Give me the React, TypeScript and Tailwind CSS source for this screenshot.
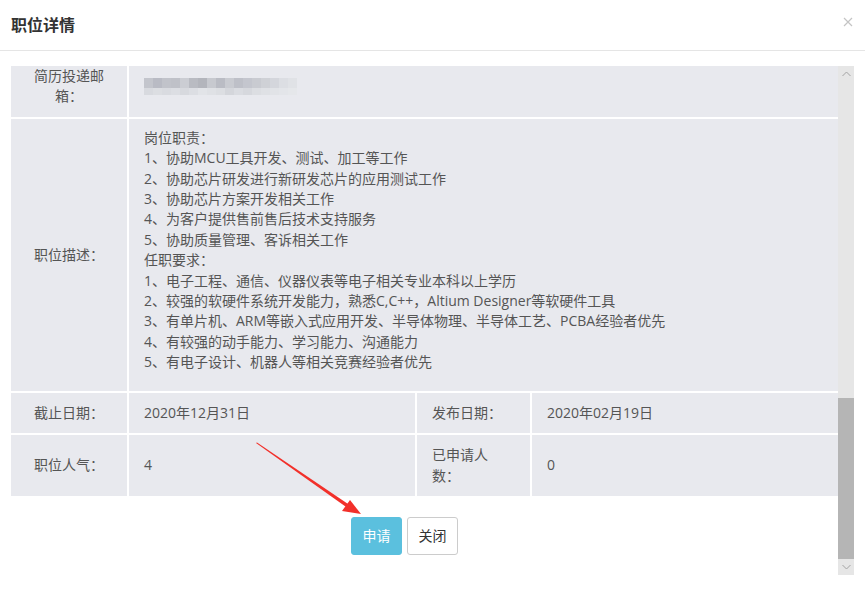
import React from "react";

const duties = [
  "岗位职责：",
  "1、协助MCU工具开发、测试、加工等工作",
  "2、协助芯片研发进行新研发芯片的应用测试工作",
  "3、协助芯片方案开发相关工作",
  "4、为客户提供售前售后技术支持服务",
  "5、协助质量管理、客诉相关工作",
  "任职要求：",
  "1、电子工程、通信、仪器仪表等电子相关专业本科以上学历",
  "2、较强的软硬件系统开发能力，熟悉C,C++，Altium Designer等软硬件工具",
  "3、有单片机、ARM等嵌入式应用开发、半导体物理、半导体工艺、PCBA经验者优先",
  "4、有较强的动手能力、学习能力、沟通能力",
  "5、有电子设计、机器人等相关竞赛经验者优先",
];

// mosaic used to hide the email address
const mosaicTop = ["#c3c5cc", "#b9bbc4", "#c1c3ca", "#bfc1c8", "#cbcdd3", "#b9bbc2", "#b3b5bc", "#c7c9cf", "#babcc4", "#c9cbd1", "#bec0c8", "#c4c6ce", "#c9cbd1", "#cfd1d6", "#d4d6dc", "#dcdee3", "#e0e2e6"];
const mosaicBottom = ["#d8dadf", "#dcdee2", "#d9dbe0", "#dcdee3", "#d7d9de", "#dcdee3", "#e2e4e8", "#dfe1e5", "#dcdee2", "#d4d6db", "#dadce1", "#d6d8dd", "#dcdee2", "#dfe1e5", "#e1e3e7", "#e3e5e9", "#e5e7ea"];

function Label({ children, left }: { children: React.ReactNode; left?: boolean }) {
  return (
    <div
      className={
        "flex items-center bg-[#e8e9ee] py-[10px] text-[14px] leading-[20.4px] text-[#555] " +
        (left ? "px-[15px]" : "justify-center px-[22px] text-center")
      }
    >
      <span>{children}</span>
    </div>
  );
}

function Value({ children, span }: { children: React.ReactNode; span?: boolean }) {
  return (
    <div
      className={
        "flex items-center bg-[#e8e9ee] px-[15px] py-[10px] text-[14px] leading-[20.4px] text-[#555] " +
        (span ? "col-span-3" : "")
      }
    >
      {children}
    </div>
  );
}

export default function App() {
  return (
    <div
      className="relative h-[594px] w-[865px] overflow-hidden bg-white"
      style={{ fontFamily: '"Open Sans", "Noto Sans CJK SC", sans-serif' }}
    >
      <div className="flex h-[51px] items-center justify-between border-b border-[#e5e5e5] pl-[11px] pr-[12px]">
        <h4 className="text-[16px] font-bold text-[#333]">职位详情</h4>
        <svg width="10" height="10" viewBox="0 0 10 10" className="mt-[-6px]">
          <path d="M1 1L9 9M9 1L1 9" stroke="#c4c4c4" strokeWidth="1.2" />
        </svg>
      </div>

      <div className="flex pl-[11px] pt-[15px]">
        <div className="h-[509px] flex-1 overflow-hidden">
          <div className="mt-[-10px] grid grid-cols-[116px_286px_113px_1fr] gap-[2px] bg-white">
            <Label>简历投递邮箱：</Label>
            <Value span>
              <div className="flex flex-col">
                <div className="flex">
                  {mosaicTop.map((c, i) => (
                    <div key={i} className="h-[10px] w-[9px]" style={{ backgroundColor: c }} />
                  ))}
                </div>
                <div className="flex">
                  {mosaicBottom.map((c, i) => (
                    <div key={i} className="h-[7px] w-[9px]" style={{ backgroundColor: c }} />
                  ))}
                </div>
              </div>
            </Value>

            <Label>职位描述：</Label>
            <div className="col-span-3 bg-[#e8e9ee] pb-[18px] pl-[15px] pt-[9px] text-[14px] leading-[20.4px] text-[#555]">
              {duties.map((d) => (
                <p key={d}>{d}</p>
              ))}
            </div>

            <Label>截止日期：</Label>
            <Value>2020年12月31日</Value>
            <Label left>发布日期：</Label>
            <Value>2020年02月19日</Value>

            <Label>职位人气：</Label>
            <Value>4</Value>
            <Label left>已申请人数：</Label>
            <Value>0</Value>
          </div>

          <div className="flex gap-[5px] pl-[340px] pt-[21px]">
            <button className="h-[38px] w-[51px] rounded-[3px] border border-[#5bc0de] bg-[#5bc0de] text-[14px] text-white">
              申请
            </button>
            <button className="h-[38px] w-[51px] rounded-[3px] border border-[#ccc] bg-white text-[14px] text-[#333]">
              关闭
            </button>
          </div>
        </div>

        <div className="flex h-[509px] w-[16px] flex-col bg-[#e6e6e6]">
          <div className="flex h-[16px] items-center justify-center">
            <svg width="9" height="6" viewBox="0 0 9 6">
              <path d="M0.5 5L4.5 1L8.5 5" fill="none" stroke="#a3a3a3" strokeWidth="1" />
            </svg>
          </div>
          <div className="h-[316px]" />
          <div className="h-[161px] bg-[#b5b5b5]" />
          <div className="flex h-[16px] items-center justify-center">
            <svg width="9" height="6" viewBox="0 0 9 6">
              <path d="M0.5 1L4.5 5L8.5 1" fill="none" stroke="#a3a3a3" strokeWidth="1" />
            </svg>
          </div>
        </div>
        <div className="w-[11px]" />
      </div>

      {/* red annotation arrow */}
      <svg className="pointer-events-none absolute left-0 top-0" width="865" height="594">
        <polygon points="256,443 257,442.6 351,506 349,509" fill="#f2302a" />
        <polygon points="361,514 342,511 350,500" fill="#f2302a" />
      </svg>
    </div>
  );
}
